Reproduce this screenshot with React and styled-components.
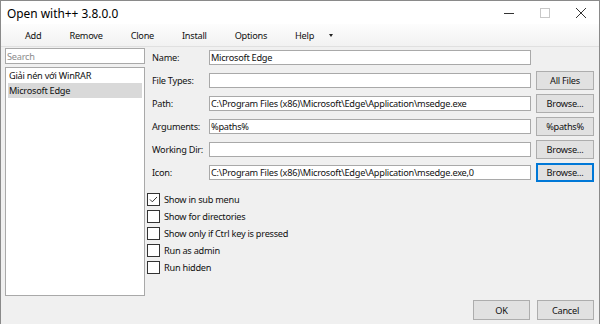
import React from 'react';
import styled, { createGlobalStyle } from 'styled-components';

const Global = createGlobalStyle`
  html, body { margin: 0; padding: 0; background: #f0f0f0; }
  * { box-sizing: border-box; }
`;

const menuItems = ['Add', 'Remove', 'Clone', 'Install', 'Options', 'Help'];

const fields = [
  { label: 'Name:', value: 'Microsoft Edge' },
  { label: 'File Types:', value: '', button: 'All Files' },
  { label: 'Path:', value: 'C:\\Program Files (x86)\\Microsoft\\Edge\\Application\\msedge.exe', button: 'Browse...' },
  { label: 'Arguments:', value: '%paths%', button: '%paths%' },
  { label: 'Working Dir:', value: '', button: 'Browse...' },
  { label: 'Icon:', value: 'C:\\Program Files (x86)\\Microsoft\\Edge\\Application\\msedge.exe,0', button: 'Browse...', focused: true },
];

const options = [
  { text: 'Show in sub menu', checked: true },
  { text: 'Show for directories' },
  { text: 'Show only if Ctrl key is pressed' },
  { text: 'Run as admin' },
  { text: 'Run hidden' },
];

export default function App() {
  return (
    <>
      <Global />
      <Window>
        <TitleBar>
          <Title>Open with++ 3.8.0.0</Title>
          <Controls>
            <Control>
              <svg width="10" height="10" viewBox="0 0 10 10"><path d="M0 5.5h10" stroke="#333" strokeWidth="1" /></svg>
            </Control>
            <Control>
              <svg width="10" height="10" viewBox="0 0 10 10"><rect x="0.5" y="0.5" width="9" height="9" fill="none" stroke="#c8c8c8" /></svg>
            </Control>
            <Control>
              <svg width="10" height="10" viewBox="0 0 10 10"><path d="M0 0L10 10M10 0L0 10" stroke="#333" strokeWidth="1" /></svg>
            </Control>
          </Controls>
        </TitleBar>
        <MenuBar>
          {menuItems.map((m) => (
            <MenuItem key={m}>{m}</MenuItem>
          ))}
          <DropArrow />
        </MenuBar>
        <Body>
          <Sidebar>
            <SearchBox placeholder="Search" />
            <List>
              <ListItem>Giải nén với WinRAR</ListItem>
              <ListItem selected>Microsoft Edge</ListItem>
            </List>
          </Sidebar>
          <Main>
            <Form>
              {fields.map((f) => (
                <React.Fragment key={f.label}>
                  <Label>{f.label}</Label>
                  <TextBox>{f.value}</TextBox>
                  {f.button ? <Button focused={f.focused}>{f.button}</Button> : <span />}
                </React.Fragment>
              ))}
            </Form>
            <Checks>
              {options.map((o) => (
                <CheckRow key={o.text}>
                  <Box>
                    {o.checked && (
                      <svg width="11" height="11" viewBox="0 0 11 11">
                        <path d="M2 5.5L4.3 7.8L9 3" fill="none" stroke="#333" strokeWidth="1" />
                      </svg>
                    )}
                  </Box>
                  {o.text}
                </CheckRow>
              ))}
            </Checks>
            <Footer>
              <Button wide>OK</Button>
              <Button wide>Cancel</Button>
            </Footer>
          </Main>
        </Body>
      </Window>
    </>
  );
}

const Window = styled.div`
  width: 600px;
  height: 324px;
  display: flex;
  flex-direction: column;
  border: 1px solid #8a8a8a;
  border-bottom: none;
  background: #f0f0f0;
  font-family: 'Noto Sans', 'Open Sans', sans-serif;
  font-size: 9.2px;
  letter-spacing: -0.25px;
  color: #111;
  overflow: hidden;
`;

const TitleBar = styled.div`
  height: 23px;
  background: #fff;
  display: flex;
  align-items: center;
  justify-content: space-between;
  padding-left: 6px;
`;

const Title = styled.div`
  font-size: 11.9px;
  letter-spacing: 0;
  color: #000;
`;

const Controls = styled.div`
  display: flex;
  height: 100%;
`;

const Control = styled.div`
  width: 36px;
  height: 100%;
  display: flex;
  align-items: center;
  justify-content: center;
  svg { display: block; }
`;

const MenuBar = styled.div`
  height: 23px;
  display: flex;
  align-items: center;
  padding-left: 10px;
  background: linear-gradient(#fdfdfd, #f2f2f2);
  border-bottom: 1px solid #e0e0e0;
`;

const MenuItem = styled.div`
  padding: 0 14px;
  color: #111;
`;

const DropArrow = styled.div`
  width: 0;
  height: 0;
  margin-left: 1px;
  border-left: 2.5px solid transparent;
  border-right: 2.5px solid transparent;
  border-top: 3px solid #222;
`;

const Body = styled.div`
  flex: 1;
  display: flex;
  padding: 1px 5px 4px 4px;
`;

const Sidebar = styled.div`
  width: 140px;
  display: flex;
  flex-direction: column;
  gap: 3px;
  padding-bottom: 24px;
`;

const SearchBox = styled.input`
  height: 16px;
  border: 1px solid #a9a9a9;
  background: #fff;
  font: inherit;
  letter-spacing: inherit;
  padding: 0 1px;
  outline: none;
  &::placeholder { color: #8c8c8c; }
`;

const List = styled.div`
  flex: 1;
  border: 1px solid #a9a9a9;
  background: #fff;
  padding: 0 2px;
`;

const ListItem = styled.div`
  height: 15px;
  line-height: 15px;
  padding-left: 1px;
  background: ${(p) => (p.selected ? '#d9d9d9' : 'transparent')};
`;

const Main = styled.div`
  flex: 1;
  display: flex;
  flex-direction: column;
  padding-left: 7px;
`;

const Form = styled.div`
  display: grid;
  grid-template-columns: 52px 322px 58px;
  grid-auto-rows: 19px;
  column-gap: 5px;
  row-gap: 4px;
  align-items: center;
  & > * { min-width: 0; }
`;

const Label = styled.div`
  white-space: nowrap;
`;

const TextBox = styled.div`
  height: 15px;
  line-height: 13px;
  border: 1px solid #a9a9a9;
  background: #fff;
  padding: 0 1px;
  white-space: nowrap;
  overflow: hidden;
`;

const Button = styled.div`
  height: ${(p) => (p.wide ? '20px' : '19px')};
  width: ${(p) => (p.wide ? '57px' : 'auto')};
  display: flex;
  align-items: center;
  justify-content: center;
  background: #e1e1e1;
  border: 1px solid ${(p) => (p.focused ? '#0078d7' : '#adadad')};
  box-shadow: ${(p) => (p.focused ? 'inset 0 0 0 1px #0078d7' : 'none')};
  color: #111;
  white-space: nowrap;
`;

const Checks = styled.div`
  display: flex;
  flex-direction: column;
  gap: 4px;
  margin: 11px 0 0 -5px;
`;

const CheckRow = styled.div`
  display: flex;
  align-items: center;
  gap: 4px;
  height: 13px;
`;

const Box = styled.div`
  width: 13px;
  height: 13px;
  border: 1px solid #333;
  background: #fff;
  display: flex;
  align-items: center;
  justify-content: center;
  svg { display: block; }
`;

const Footer = styled.div`
  margin-top: auto;
  display: flex;
  justify-content: flex-end;
  gap: 7px;
`;
